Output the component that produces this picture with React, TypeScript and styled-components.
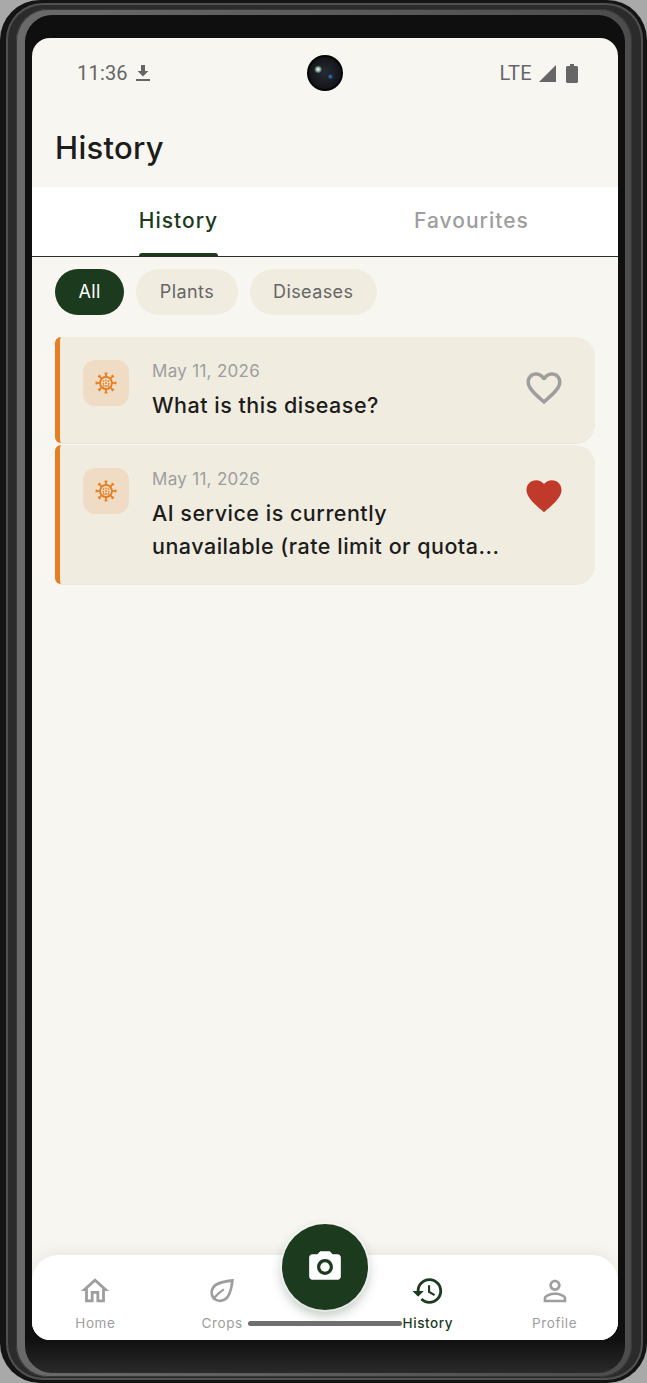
import React from "react";
import styled, { createGlobalStyle } from "styled-components";

const GREEN = "#1c3a1e";
const SANS = `Inter, "Liberation Sans", sans-serif`;

const GlobalStyle = createGlobalStyle`
  html, body {
    margin: 0;
    padding: 0;
    background: #a9a9a9;
  }
`;

const items = [
  { id: 1, date: "May 11, 2026", title: "What is this disease?", liked: false },
  { id: 2, date: "May 11, 2026", title: "AI service is currently unavailable (rate limit or quota...", liked: true },
];

type NavEntry = { label: string; d: string; vein?: string; active?: boolean };

const navItems: NavEntry[] = [
  {
    label: "Home",
    d: "M12 5.69l5 4.5V18h-2v-6H9v6H7v-7.81l5-4.5M12 3L2 12h3v8h6v-6h2v6h6v-8h3L12 3z",
  },
  {
    label: "Crops",
    d: "M20.4 3.600S9.600 4.200 6 7.800C3.200 10.600 3.100 15 5.600 17.900 8.500 20.600 13.200 20.500 16 17.700 19.700 14 20.400 3.600 20.400 3.600zM18.200 5.800C17.800 9.300 16.700 14.300 14.600 16.300 12.500 18.400 9.100 18.500 7 16.500 5.100 14.400 5.200 11.200 7.400 9.200 9.500 7.100 14.600 6.200 18.200 5.800z",
    vein: "M6.500 18.700L5.200 17.700C6.900 14.700 9.700 12 13 10.200L13.800 11.500C10.700 13.400 8.200 15.800 6.500 18.700z",
  },
  { label: "gap", d: "" },
  {
    label: "History",
    active: true,
    d: "M13 3c-4.970 0-9 4.030-9 9H1l3.890 3.890.07.14L9 12H6c0-3.870 3.130-7 7-7s7 3.130 7 7-3.130 7-7 7c-1.930 0-3.680-.79-4.940-2.060l-1.420 1.420C8.270 19.990 10.510 21 13 21c4.970 0 9-4.030 9-9s-4.030-9-9-9zm-1 5v5l4.280 2.540.72-1.210-3.500-2.080V8H12z",
  },
  {
    label: "Profile",
    d: "M12 5.900c1.160 0 2.100.94 2.100 2.100s-.94 2.100-2.100 2.100S9.900 9.160 9.900 8s.94-2.100 2.100-2.100m0 9c2.970 0 6.100 1.460 6.100 2.100v1.100H5.900V17c0-.64 3.130-2.100 6.100-2.100M12 4C9.790 4 8 5.790 8 8s1.790 4 4 4 4-1.790 4-4-1.790-4-4-4zm0 9c-2.670 0-8 1.340-8 4v3h16v-3c0-2.660-5.330-4-8-4z",
  },
];

const HEART_FILLED =
  "M12 21.350l-1.450-1.320C5.400 15.360 2 12.280 2 8.500 2 5.420 4.420 3 7.500 3c1.740 0 3.410.81 4.500 2.090C13.090 3.810 14.760 3 16.500 3 19.580 3 22 5.420 22 8.500c0 3.780-3.400 6.860-8.550 11.540L12 21.350z";
const HEART_OUTLINE =
  "M16.500 3c-1.740 0-3.410.81-4.500 2.090C10.910 3.810 9.240 3 7.500 3 4.420 3 2 5.420 2 8.500c0 3.780 3.400 6.860 8.550 11.540L12 21.350l1.450-1.320C18.600 15.360 22 12.280 22 8.500 22 5.420 19.580 3 16.500 3zm-4.400 15.550l-.1.1-.1-.1C7.140 14.240 4 11.390 4 8.500 4 6.500 5.500 5 7.500 5c1.540 0 3.040.99 3.570 2.360h1.870C13.460 5.990 14.960 5 16.500 5c2 0 3.500 1.500 3.500 3.500 0 2.890-3.140 5.740-7.900 10.050z";

function VirusIcon() {
  const spokes = [0, 45, 90, 135, 180, 225, 270, 315];
  const dots = [
    [12, 12], [9.500, 10.200], [12, 9.300], [14.500, 10.200], [9.300, 12.800], [14.700, 12.800], [12, 14.900], [9.800, 14.800], [14.200, 14.800],
  ];
  return (
    <svg width="24" height="24" viewBox="0 0 24 24" fill="none">
      <circle cx="12" cy="12" r="6" stroke="#e67e22" strokeWidth="1.800" />
      {spokes.map((a) => (
        <g key={a} transform={`rotate(${a} 12 12)`} stroke="#e67e22" strokeWidth="1.700">
          <path d="M12 6V2.400" />
          <path d="M10.600 2.400h2.800" />
        </g>
      ))}
      {dots.map(([x, y]) => (
        <circle key={`${x}-${y}`} cx={x} cy={y} r="0.900" fill="#e67e22" />
      ))}
    </svg>
  );
}

export default function App() {
  return (
    <>
      <GlobalStyle />
      <Phone>
        <OuterRail>
          <InnerRail>
            <Core>
              <Screen>
                <StatusBar>
                  <StatusLeft>
                    <span>11:36</span>
                    <svg width="16" height="18" viewBox="0 0 16 18">
                      <path d="M6 1h4v6h3.400L8 12.400 2.600 7H6z" fill="#666" />
                      <rect x="1" y="15" width="14" height="2" fill="#666" />
                    </svg>
                  </StatusLeft>
                  <StatusRight>
                    <span>LTE</span>
                    <svg width="18" height="18" viewBox="0 0 18 18">
                      <path d="M18 1v17H1z" fill="#666" />
                    </svg>
                    <svg width="12" height="19" viewBox="0 0 12 19">
                      <path d="M4 0h4v2h2.500c.8 0 1.500.7 1.500 1.500V17.500c0 .8-.7 1.500-1.500 1.500h-9C.7 19 0 18.300 0 17.500V3.500C0 2.700.7 2 1.500 2H4z" fill="#666" />
                    </svg>
                  </StatusRight>
                </StatusBar>

                <Header>History</Header>

                <Tabs>
                  <Tab>
                    <TabLabel $active>History</TabLabel>
                  </Tab>
                  <Tab>
                    <TabLabel>Favourites</TabLabel>
                  </Tab>
                </Tabs>

                <Chips>
                  <Chip $active>All</Chip>
                  <Chip>Plants</Chip>
                  <Chip>Diseases</Chip>
                </Chips>

                <List>
                  {items.map((item) => (
                    <Card key={item.id}>
                      <IconTile>
                        <VirusIcon />
                      </IconTile>
                      <CardBody>
                        <CardDate>{item.date}</CardDate>
                        <CardTitle>{item.title}</CardTitle>
                      </CardBody>
                      <HeartIcon viewBox="0 0 24 24">
                        <path d={item.liked ? HEART_FILLED : HEART_OUTLINE} fill={item.liked ? "#c0392b" : "#9e9e9e"} />
                      </HeartIcon>
                    </Card>
                  ))}
                </List>

                <BottomNav>
                  {navItems.map((nav) =>
                    nav.label === "gap" ? (
                      <NavGap key={nav.label} />
                    ) : (
                      <NavItem key={nav.label} $active={nav.active}>
                        <svg width="34" height="34" viewBox="0 0 24 24">
                          <path d={nav.d} fill="currentColor" fillRule="evenodd" />
                          {nav.vein && <path d={nav.vein} fill="currentColor" />}
                        </svg>
                        <NavLabel $active={nav.active}>{nav.label}</NavLabel>
                      </NavItem>
                    )
                  )}
                  <Fab>
                    <svg width="38" height="38" viewBox="0 0 24 24">
                      <path
                        d="M9 2L7.170 4H4c-1.100 0-2 .9-2 2v12c0 1.100.9 2 2 2h16c1.100 0 2-.9 2-2V6c0-1.100-.9-2-2-2h-3.170L15 2H9zm3 15c-2.760 0-5-2.240-5-5s2.240-5 5-5 5 2.240 5 5-2.240 5-5 5z"
                        fill="#fff"
                      />
                      <circle cx="12" cy="12" r="3" fill="#fff" />
                    </svg>
                  </Fab>
                  <GestureBar />
                </BottomNav>

                <CameraHole />
              </Screen>
            </Core>
          </InnerRail>
        </OuterRail>
      </Phone>
    </>
  );
}

const Phone = styled.div`
  box-sizing: border-box;
  width: 647px;
  height: 1383px;
  padding: 3px 4px 3px 6px;
  background: #141414;
  border-radius: 40px;
`;

const OuterRail = styled.div`
  box-sizing: border-box;
  height: 100%;
  padding: 6px 11px 3px 10px;
  background: #2b2b2b;
  border-radius: 37px;
  box-shadow: inset 0 0 0 2px #505050;
`;

const InnerRail = styled.div`
  box-sizing: border-box;
  height: 100%;
  padding: 6px 7px 4px 9px;
  background: linear-gradient(to right, #6a6a6a, #4c4c4c);
  border-radius: 32px;
  box-shadow: inset 0 0 0 1px #383838;
`;

const Core = styled.div`
  box-sizing: border-box;
  height: 100%;
  padding: 23px 7px 33px 7px;
  background: linear-gradient(to top, #2a2a2a 0, #0f0f0f 34px);
  border-radius: 27px;
`;

const Screen = styled.div`
  position: relative;
  height: 100%;
  display: flex;
  flex-direction: column;
  background: #f7f6f1;
  border-radius: 18px;
  overflow: hidden;
  font-family: ${SANS};
`;

const StatusBar = styled.div`
  display: flex;
  justify-content: space-between;
  align-items: center;
  height: 70px;
  padding: 0 40px 0 45px;
  font-family: Roboto, sans-serif;
  font-size: 20px;
  color: #666;
  flex-shrink: 0;
`;

const StatusLeft = styled.div`
  display: flex;
  align-items: center;
  gap: 7px;
  letter-spacing: 0.2px;
`;

const StatusRight = styled.div`
  display: flex;
  align-items: center;
  gap: 6px;
  font-size: 20px;
  letter-spacing: 0.4px;

  svg:last-child {
    margin-left: 4px;
  }
`;

const CameraHole = styled.div`
  position: absolute;
  top: 17px;
  left: 275px;
  width: 36px;
  height: 36px;
  border-radius: 50%;
  background:
    radial-gradient(circle at 31% 40%, #f2fff2 0, #8fb5a0 2px, transparent 4px),
    radial-gradient(circle at 65% 60%, #3f8fe0 0, #1d4a80 1.5px, transparent 3px),
    radial-gradient(circle at 50% 50%, #262b33 0, #15161b 60%, #000 100%);
  box-shadow: inset 0 0 0 2px #050505;
`;

const Header = styled.h1`
  margin: 0;
  height: 79px;
  padding: 20px 0 0 23px;
  box-sizing: border-box;
  font-size: 31px;
  line-height: 40px;
  font-weight: 500;
  letter-spacing: 0.3px;
  color: #1c1c1c;
  flex-shrink: 0;
`;

const Tabs = styled.div`
  display: flex;
  height: 70px;
  box-sizing: border-box;
  background: #fff;
  border-bottom: 1px solid #2a2f2a;
  flex-shrink: 0;
`;

const Tab = styled.div`
  flex: 1;
  display: flex;
  justify-content: center;
`;

const TabLabel = styled.div<{ $active?: boolean }>`
  position: relative;
  height: 69px;
  line-height: 67px;
  font-size: 21px;
  font-weight: 500;
  letter-spacing: 1px;
  color: ${(p) => (p.$active ? GREEN : "#9e9e9e")};

  ${(p) =>
    p.$active &&
    `
    &::after {
      content: "";
      position: absolute;
      left: 0;
      right: 0;
      bottom: 0;
      height: 3px;
      border-radius: 3px 3px 0 0;
      background: ${GREEN};
    }
  `}
`;

const Chips = styled.div`
  display: flex;
  gap: 12px;
  padding: 12px 23px 0;
  flex-shrink: 0;
`;

const Chip = styled.div<{ $active?: boolean }>`
  height: 46px;
  line-height: 46px;
  padding: 0 23.500px;
  border-radius: 23px;
  font-size: 18px;
  letter-spacing: 0.4px;
  color: ${(p) => (p.$active ? "#fff" : "#666")};
  background: ${(p) => (p.$active ? GREEN : "#f0ece0")};
`;

const List = styled.div`
  display: flex;
  flex-direction: column;
  gap: 2px;
  padding: 22px 23px 0;
  flex: 1;
`;

const Card = styled.div`
  display: flex;
  align-items: flex-start;
  box-sizing: border-box;
  padding: 23px 30px 21.500px 23px;
  background: #f0ece0;
  border-left: 5px solid #e67e22;
  border-radius: 6px 20px 20px 6px;
  box-shadow: 0 1px 0 #e9e8e2;
`;

const IconTile = styled.div`
  display: flex;
  align-items: center;
  justify-content: center;
  width: 46px;
  height: 46px;
  border-radius: 12px;
  background: #f0dcc4;
  flex-shrink: 0;
`;

const CardBody = styled.div`
  flex: 1;
  min-width: 0;
  margin-left: 23px;
`;

const CardDate = styled.div`
  font-size: 17px;
  line-height: 22px;
  letter-spacing: 0.3px;
  color: #9e9e9e;
`;

const CardTitle = styled.div`
  margin-top: 7px;
  max-width: 352px;
  font-size: 21.500px;
  line-height: 32.500px;
  font-weight: 500;
  letter-spacing: 0.5px;
  color: #1c1c1c;
`;

const HeartIcon = styled.svg`
  width: 42px;
  height: 42px;
  margin-top: 7px;
  flex-shrink: 0;
`;

const BottomNav = styled.nav`
  position: relative;
  display: flex;
  height: 85px;
  box-sizing: border-box;
  padding-top: 19px;
  background: #fff;
  border-radius: 26px 26px 0 0;
  box-shadow: 0 -4px 14px rgba(0, 0, 0, 0.06);
  flex-shrink: 0;
`;

const NavItem = styled.div<{ $active?: boolean }>`
  flex: 1;
  display: flex;
  flex-direction: column;
  align-items: center;
  color: ${(p) => (p.$active ? GREEN : "#9e9e9e")};
`;

const NavGap = styled.div`
  width: 79px;
  flex-shrink: 0;
`;

const NavLabel = styled.div<{ $active?: boolean }>`
  font-size: 13.500px;
  line-height: 16px;
  letter-spacing: 0.6px;
  font-weight: ${(p) => (p.$active ? 500 : 400)};
  margin-top: 7px;
`;

const Fab = styled.div`
  position: absolute;
  top: -31px;
  left: 250px;
  width: 86px;
  height: 86px;
  display: flex;
  align-items: center;
  justify-content: center;
  border-radius: 50%;
  background: ${GREEN};
  box-shadow:
    0 0 0 2px rgba(255, 255, 255, 0.45),
    0 5px 12px rgba(28, 58, 30, 0.3);
`;

const GestureBar = styled.div`
  position: absolute;
  left: 216px;
  top: 66px;
  width: 154px;
  height: 5px;
  border-radius: 3px;
  background: #6f6f6f;
`;
